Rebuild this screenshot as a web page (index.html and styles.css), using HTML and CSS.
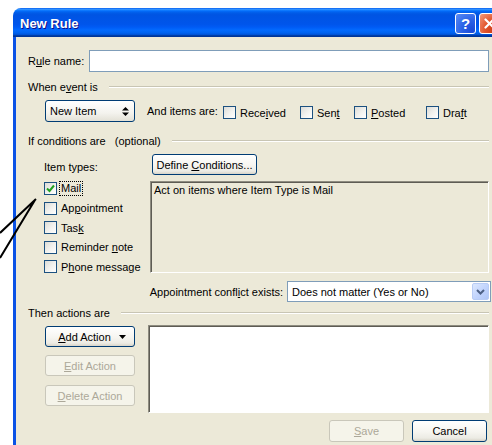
FILE: index.html
```html
<!DOCTYPE html>
<html lang="en">
<head>
<meta charset="utf-8">
<title>New Rule</title>
<link rel="stylesheet" href="styles.css">
</head>
<body>
<div class="window">
  <div class="titlebar">
    <span class="title">New Rule</span>
    <div class="title-controls">
      <span class="tbtn help">?</span>
      <span class="tbtn close">
        <svg width="11" height="11" viewBox="0 0 11 11"><path d="M1.5 1.5 L9.5 9.5 M9.5 1.5 L1.5 9.5" stroke="#fff" stroke-width="2.2" stroke-linecap="round"/></svg>
      </span>
    </div>
  </div>

  <div class="client">
    <div class="name-row">
      <span class="name-lbl">R<u>u</u>le name:</span>
      <div class="textbox"></div>
    </div>

    <div class="group-head"><span>When e<u>v</u>ent is</span><i class="rule"></i></div>

    <div class="event-row">
      <div class="spin-select">
        <span>New Item</span>
        <svg width="7" height="9" viewBox="0 0 7 9"><path d="M3.5 0 L7 3.5 L0 3.5 Z M0 5.5 L7 5.5 L3.5 9 Z" fill="#000"/></svg>
      </div>
      <span class="and-lbl">And items are:</span>
      <div class="state-grid">
        <label class="chk"><span class="box"></span><span>Rece<u>i</u>ved</span></label>
        <label class="chk"><span class="box"></span><span>Sen<u>t</u></span></label>
        <label class="chk"><span class="box"></span><span><u>P</u>osted</span></label>
        <label class="chk"><span class="box"></span><span>Dra<u>f</u>t</span></label>
      </div>
    </div>

    <div class="group-head"><span>If conditions are &nbsp;&nbsp;(optional)</span><i class="rule"></i></div>

    <div class="cond">
      <div class="types">
        <div class="types-lbl">Item types:</div>
        <label class="chk type"><span class="box"><svg width="11" height="11" viewBox="0 0 11 11"><path d="M2 5.5 L4.5 8 L9 2.5" stroke="#21A121" stroke-width="2" fill="none"/></svg></span><span class="focus">Mail</span></label>
        <label class="chk type"><span class="box"></span><span>Ap<u>p</u>ointment</span></label>
        <label class="chk type"><span class="box"></span><span>Tas<u>k</u></span></label>
        <label class="chk type"><span class="box"></span><span>Reminder <u>n</u>ote</span></label>
        <label class="chk type"><span class="box"></span><span>P<u>h</u>one message</span></label>
      </div>
      <div class="cond-main">
        <button class="btn define"><span>Define <u>C</u>onditions...</span></button>
        <div class="desc">Act on items where Item Type is Mail</div>
      </div>
    </div>

    <div class="conflict-row">
      <span>Appointment confl<u>i</u>ct exists:</span>
      <div class="combo">
        <span>Does not matter (Yes or No)</span>
        <span class="combo-btn">
          <svg width="9" height="6" viewBox="0 0 9 6"><path d="M1 1 L4.5 4.5 L8 1" stroke="#4D6185" stroke-width="2" fill="none"/></svg>
        </span>
      </div>
    </div>

    <div class="group-head"><span>Then actions are</span><i class="rule"></i></div>

    <div class="actions">
      <div class="action-btns">
        <button class="btn add"><span><u>A</u>dd Action</span><svg width="7" height="4" viewBox="0 0 7 4"><path d="M0 0 L7 0 L3.5 4 Z" fill="#000"/></svg></button>
        <button class="btn disabled"><span><u>E</u>dit Action</span></button>
        <button class="btn disabled"><span><u>D</u>elete Action</span></button>
      </div>
      <div class="list"></div>
    </div>

    <div class="footer">
      <button class="btn disabled wide"><span><u>S</u>ave</span></button>
      <button class="btn wide"><span>Cancel</span></button>
    </div>
  </div>
</div>

<svg class="callout" width="60" height="270" viewBox="0 0 60 270">
  <path d="M0 233 L36 199 M0 258 L35 200" stroke="#000" stroke-width="2" fill="none"/>
</svg>
</body>
</html>
```

FILE: styles.css
```css
html, body {
  margin: 0;
  padding: 0;
  overflow: hidden;
}

body {
  width: 492px;
  height: 445px;
  background: #fff;
  position: relative;
  font-family: "Liberation Sans", Arial, sans-serif;
  font-size: 11px;
  color: #000;
}

u {
  text-decoration: underline;
  text-underline-offset: 1px;
}

/* window frame, running on past the right and bottom of the screen */
.window {
  margin: 8px 0 0 13px;
  width: 479px;
}

.titlebar {
  height: 29px;
  border-radius: 8px 0 0 0;
  overflow: hidden;
  background: linear-gradient(to bottom, #0058EE 0%, #3593FF 4%, #288EFF 6%, #127DFF 8%, #036FFC 10%, #0262EE 14%, #0057E5 20%, #0054E3 24%, #0055EB 56%, #005BF5 66%, #026AFE 76%, #0062EF 86%, #0052D6 92%, #0040AB 94%, #003092 100%);
  display: flex;
  align-items: center;
  padding: 0 0 0 7px;
  box-sizing: border-box;
}

.title {
  color: #fff;
  font-weight: bold;
  font-size: 13px;
  text-shadow: 1px 1px 0 #0F1089;
  flex: 1;
  padding-top: 1px;
}

.title-controls {
  display: flex;
  gap: 3px;
  margin-top: 1px;
  margin-right: -8px;
  flex: none;
}

.tbtn {
  width: 21px;
  height: 21px;
  box-sizing: border-box;
  border: 1px solid #fff;
  border-radius: 3px;
  display: flex;
  align-items: center;
  justify-content: center;
  color: #fff;
}

.help {
  background: radial-gradient(circle at 85% 85%, #1A4AD8 0%, #2B62E6 45%, #5C8DF6 100%);
  font-weight: bold;
  font-size: 15px;
}

.close {
  background: radial-gradient(circle at 85% 85%, #C63510 0%, #E2562D 50%, #F39C7E 100%);
}

.client {
  background: #ECE9D8;
  border-left: 3px solid #0A52E6;
  padding: 13px 3px 0 12px;
  height: 408px;
  box-sizing: border-box;
}

/* rule name */
.name-row {
  display: flex;
  align-items: center;
  height: 22px;
}

.name-lbl {
  width: 61px;
}

.textbox {
  width: 400px;
  height: 22px;
  box-sizing: border-box;
  border: 1px solid #7F9DB9;
  background: #fff;
}

/* section captions with etched rule */
.group-head {
  display: flex;
  align-items: center;
  height: 14px;
}

.group-head .rule {
  flex: 1;
  margin-left: 11px;
  height: 0;
  border-top: 1px solid #C8C5B4;
  border-bottom: 1px solid #fff;
}

.name-row + .group-head {
  margin-top: 8px;
}

/* event row */
.event-row {
  display: flex;
  align-items: center;
  height: 22px;
  margin-top: 6px;
  padding-left: 17px;
}

.event-row + .group-head {
  margin-top: 12px;
}

.spin-select {
  width: 90px;
  height: 22px;
  box-sizing: border-box;
  border: 1px solid #003C74;
  border-radius: 3px;
  background: linear-gradient(to bottom, #FFFFFF 0%, #F4F3EE 60%, #E3E1D6 100%);
  display: flex;
  align-items: center;
  justify-content: space-between;
  padding: 0 5px 0 4px;
}

.and-lbl {
  width: 76px;
  margin-left: 12px;
}

.state-grid {
  display: grid;
  grid-template-columns: 77px 54px 72px auto;
  margin-top: 3px;
}

.chk {
  display: flex;
  align-items: center;
  gap: 4px;
}

.box {
  width: 13px;
  height: 13px;
  box-sizing: border-box;
  border: 1px solid #1C5180;
  background: linear-gradient(135deg, #DCDCD7 0%, #F2F2EF 55%, #FFFFFF 100%);
  display: flex;
  align-items: center;
  justify-content: center;
  flex: none;
}

/* conditions */
.cond {
  display: flex;
  margin-top: 6px;
  height: 119px;
}

.types {
  width: 106px;
  padding-left: 16px;
  padding-top: 6px;
}

.types-lbl {
  height: 14px;
  line-height: 14px;
  margin-bottom: 4.75px;
}

.type {
  height: 19.5px;
}

.focus {
  outline: 1px dotted #000;
  padding: 0 1px;
  margin-left: -1px;
  line-height: 13px;
}

.cond-main {
  flex: 1;
  display: flex;
  flex-direction: column;
}

.btn {
  font-family: "Liberation Sans", Arial, sans-serif;
  font-size: 11px;
  color: #000;
  height: 21px;
  box-sizing: border-box;
  border: 1px solid #003C74;
  border-radius: 3px;
  background: linear-gradient(to bottom, #FFFFFF 0%, #F6F5F0 55%, #ECEBE4 85%, #D8D4C8 100%);
  padding: 0;
  display: flex;
  align-items: center;
  justify-content: center;
}

.btn.disabled {
  border-color: #C9C7BA;
  color: #ACA899;
  background: #F5F4EA;
}

.define {
  width: 105px;
  margin-left: 2px;
}

.desc {
  margin-top: 6px;
  height: 92px;
  box-sizing: border-box;
  border: 1px solid;
  border-color: #8E8C80 #FFFFFF #FFFFFF #8E8C80;
  box-shadow: inset 1px 1px 0 #5E5C54;
  padding: 2px 3px;
  line-height: 13px;
}

/* conflict row */
.conflict-row {
  display: flex;
  align-items: center;
  justify-content: flex-end;
  gap: 4px;
  margin-top: 8px;
  margin-right: -2px;
}

.combo {
  width: 204px;
  height: 21px;
  box-sizing: border-box;
  border: 1px solid #7F9DB9;
  background: #fff;
  display: flex;
  align-items: center;
  justify-content: space-between;
  padding: 0 1px 0 4px;
}

.combo-btn {
  width: 17px;
  height: 17px;
  box-sizing: border-box;
  border: 1px solid #B8CCF5;
  border-radius: 2px;
  background: linear-gradient(135deg, #DCE8FE 0%, #C3D5FD 50%, #AFC6F7 100%);
  display: flex;
  align-items: center;
  justify-content: center;
}

.conflict-row + .group-head {
  margin-top: 4px;
}

/* actions */
.actions {
  display: flex;
  margin-top: 5px;
  padding-left: 17px;
  height: 88px;
}

.action-btns {
  width: 90px;
  display: flex;
  flex-direction: column;
  gap: 8px;
  padding-top: 1px;
}

.action-btns .btn {
  width: 90px;
  height: 21px;
}

.action-btns .btn + .btn + .btn {
  margin-top: 1px;
}

.add {
  gap: 8px;
  padding-left: 4px;
}

.list {
  margin-left: 13px;
  flex: 1;
  background: #fff;
  box-sizing: border-box;
  border: 1px solid;
  border-color: #8E8C80 #FFFFFF #FFFFFF #8E8C80;
  box-shadow: inset 1px 1px 0 #5E5C54;
}

/* bottom buttons */
.footer {
  display: flex;
  justify-content: flex-end;
  gap: 8px;
  margin-top: 7px;
  padding-right: 2px;
}

.wide {
  width: 75px;
  height: 22px;
}

/* pointer lines drawn over the dialog */
.callout {
  position: absolute;
  left: 0;
  top: 0;
}
```
